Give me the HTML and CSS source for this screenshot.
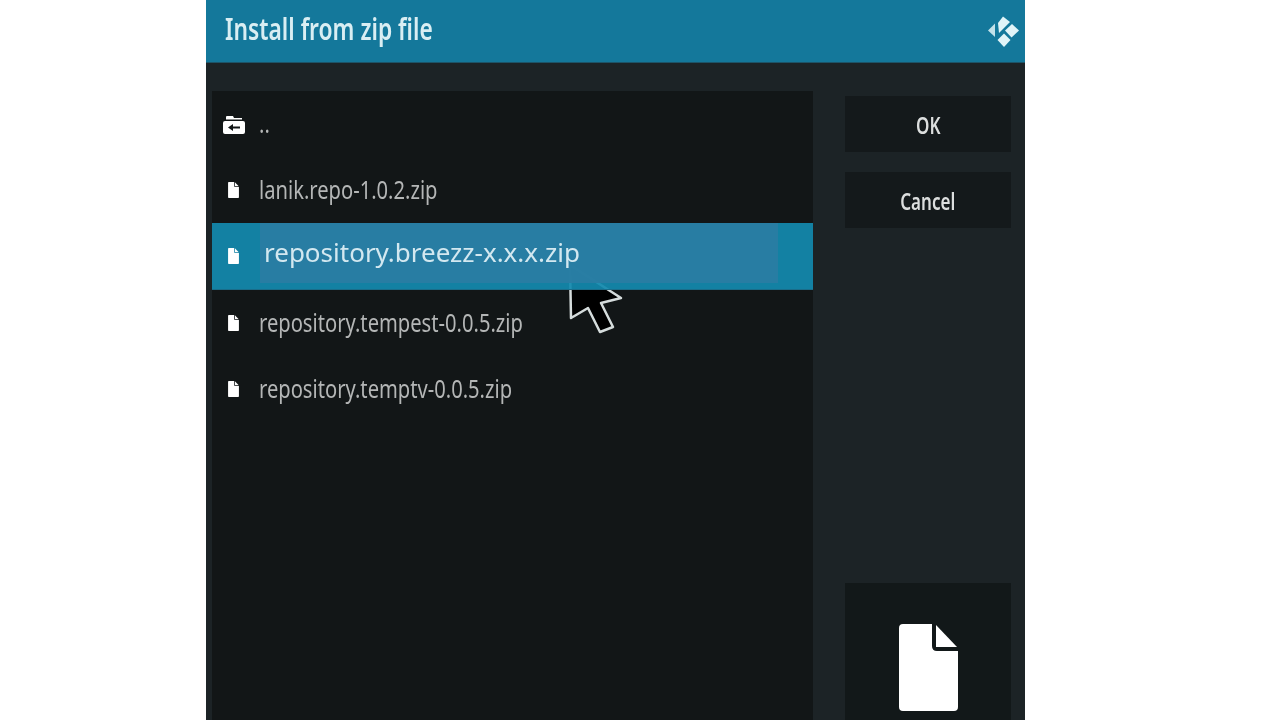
FILE: index.html
```html
<!DOCTYPE html>
<html lang="en">
<head>
  <meta charset="UTF-8">
  <title>Install from zip file</title>
  <link rel="stylesheet" href="styles.css">
</head>
<body>
  <svg class="defs" width="0" height="0">
    <symbol id="file" viewBox="0 0 59 87">
      <path d="M4 0H33V22Q33 27 38 27H59V83Q59 87 55 87H4Q0 87 0 83V4Q0 0 4 0Z"/>
      <path d="M37 1L58 23H37Z"/>
    </symbol>
  </svg>

  <div class="dialog">
    <header class="title-bar">
      <h1 class="title"><span class="squeeze">Install from zip file</span></h1>
      <svg class="logo" viewBox="0 0 32 32" width="32" height="32">
        <path d="M0 14.500L7 7.500V21Z" opacity=".85"/>
        <path d="M10 7L15 .5L22 6L11 17Z"/>
        <path d="M24 8L31 14.500L23.500 21.500L17 14.500Z"/>
        <path d="M16 17.500L22.500 24L16 31L9.500 24Z"/>
      </svg>
    </header>

    <div class="content">
      <div class="list">
        <svg class="cursor" viewBox="0 0 60 72" width="60" height="72">
          <path d="M4 3L55 36L35 41L47 65L34 70L22 46L5 56Z"/>
        </svg>

        <div class="row">
          <svg class="folder-icon" viewBox="0 0 22 18" width="22" height="18">
            <path d="M3 1Q3 0 4 0H10L11 2H19V3.500H3Z"/>
            <path d="M2 5H20Q22 5 22 7V16Q22 18 20 18H2Q0 18 0 16V7Q0 5 2 5ZM5 11.500L10 8V10.500H17V12.500H10V15Z" fill-rule="evenodd"/>
          </svg>
          <span class="name squeeze">..</span>
        </div>
        <div class="row">
          <svg class="file-icon"><use href="#file"/></svg>
          <span class="name squeeze">lanik.repo-1.0.2.zip</span>
        </div>
        <div class="row selected">
          <svg class="file-icon"><use href="#file"/></svg>
          <div class="selected-bar">repository.breezz-x.x.x.zip</div>
        </div>
        <div class="row">
          <svg class="file-icon"><use href="#file"/></svg>
          <span class="name squeeze">repository.tempest-0.0.5.zip</span>
        </div>
        <div class="row">
          <svg class="file-icon"><use href="#file"/></svg>
          <span class="name squeeze">repository.temptv-0.0.5.zip</span>
        </div>
      </div>

      <aside class="side">
        <div class="btn"><span class="squeeze">OK</span></div>
        <div class="btn"><span class="squeeze">Cancel</span></div>
        <div class="preview">
          <svg class="preview-icon"><use href="#file"/></svg>
        </div>
      </aside>
    </div>
  </div>
</body>
</html>
```

FILE: styles.css
```css
html, body {
  margin: 0;
  height: 720px;
  overflow: hidden;
  background-color: #fff;
}

body {
  font-family: 'Noto Sans', 'Open Sans', sans-serif;
}

.defs {
  position: absolute;
}

/* the reference is an upscaled capture, everything is a bit soft */
.dialog {
  width: 819px;
  height: 720px;
  margin-left: 206px;
  background-color: #1c2326;
  display: flex;
  flex-direction: column;
  overflow: hidden;
  filter: blur(0.5px);
}

.title-bar {
  height: 63px;
  flex: none;
  background-color: #14789b;
  box-shadow: inset 0 -1px 0 #1d5468;
  display: flex;
  align-items: center;
  justify-content: space-between;
  padding: 0 5px 0 19px;
}

.title {
  margin: 0 0 5px;
  font-size: 30px;
  font-weight: 600;
  color: #d9eef3;
  line-height: 40px;
}

/* kodi's font is narrower than anything installed */
.squeeze {
  display: inline-block;
  white-space: nowrap;
  transform-origin: left center;
}

.title .squeeze {
  transform: scaleX(0.76);
}

.logo {
  fill: #e0f4f8;
}

.content {
  flex: 1;
  display: flex;
  padding-top: 28px;
  padding-left: 6px;
}

.list {
  position: relative;
  width: 601px;
  background-color: #121617;
}

.row {
  height: 66px;
  display: flex;
  align-items: center;
  padding-left: 16px;
  color: #b4b6b6;
  font-size: 26px;
}

.name {
  margin-top: -3px;
  transform: scaleX(0.775);
}

.folder-icon {
  margin-left: -5px;
  margin-right: 14px;
  margin-top: 2px;
  flex: none;
  fill: #fff;
}

.file-icon {
  width: 11px;
  height: 16px;
  margin-right: 20px;
  flex: none;
  fill: #fff;
}

.selected {
  position: relative;
  z-index: 2;
  height: 67px;
  align-items: flex-start;
  background-color: rgba(19, 138, 174, 0.93);
  box-shadow: inset 0 -1px 0 #1a6d8a;
}

.selected .file-icon {
  margin-right: 21px;
  margin-top: 25px;
}

.selected-bar {
  width: 518px;
  height: 60px;
  box-sizing: border-box;
  padding: 9px 0 0 4px;
  background-color: rgba(42, 125, 163, 0.92);
  color: #d3e8f0;
  font-size: 26px;
  line-height: 40px;
  white-space: nowrap;
}

.cursor {
  position: absolute;
  left: 354px;
  top: 171px;
  z-index: 1;
  fill: #000;
  stroke: #d5dcdc;
  stroke-width: 2.500;
  stroke-linejoin: round;
}

.side {
  width: 166px;
  margin-left: 32px;
  padding-top: 5px;
  display: flex;
  flex-direction: column;
  gap: 20px;
}

.btn {
  height: 56px;
  background-color: #14191b;
  color: #dcdede;
  font-size: 24px;
  font-weight: 600;
  display: flex;
  align-items: center;
  justify-content: center;
}

.btn .squeeze {
  margin-top: 1px;
  transform: scaleX(0.71);
  transform-origin: center center;
}

.preview {
  margin-top: auto;
  height: 137px;
  flex: none;
  background-color: #121819;
  display: flex;
  justify-content: center;
  padding-top: 41px;
  box-sizing: border-box;
}

.preview-icon {
  width: 59px;
  height: 87px;
  fill: #fff;
  flex: none;
}
```
